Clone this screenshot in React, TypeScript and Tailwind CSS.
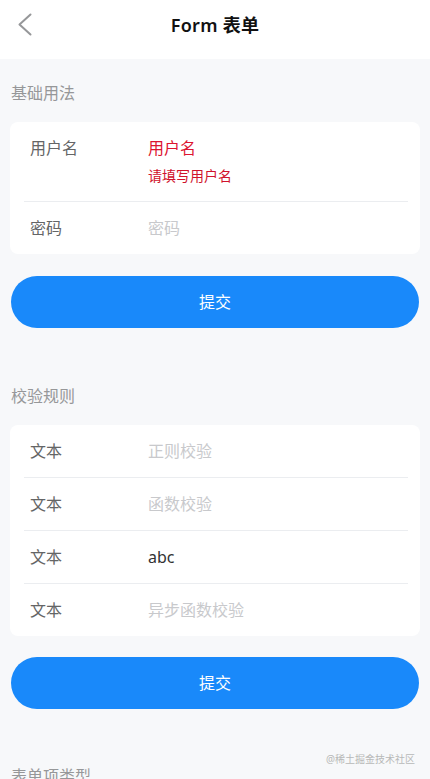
import React from 'react';

const FONT = { fontFamily: '"Noto Sans", "Noto Sans CJK SC", sans-serif' };

type Field = {
    label: string;
    value?: string;
    placeholder?: string;
    error?: string;
};

const basicFields: Field[] = [
    { label: '用户名', value: '用户名', error: '请填写用户名' },
    { label: '密码', placeholder: '密码' },
];

const ruleFields: Field[] = [
    { label: '文本', placeholder: '正则校验' },
    { label: '文本', placeholder: '函数校验' },
    { label: '文本', value: 'abc' },
    { label: '文本', placeholder: '异步函数校验' },
];

function FieldRow({ field }: { field: Field }) {
    const hasError = !!field.error;
    return (
        <div className="flex px-[20px] pt-[14px] pb-[14px]">
            <div className="w-[118px] shrink-0 text-[16px] leading-[24px] text-[#646566]">
                {field.label}
            </div>
            <div className="flex-1">
                {field.value ? (
                    <div className={`text-[16px] leading-[24px] ${hasError ? 'text-[#dc1430]' : 'text-[#323233]'}`}>
                        {field.value}
                    </div>
                ) : (
                    <div className="text-[16px] leading-[24px] text-[#c8c9cc]">{field.placeholder}</div>
                )}
                {hasError && (
                    <div className="mt-[6px] mb-[1px] text-[14px] leading-[20px] text-[#d0122c]">{field.error}</div>
                )}
            </div>
        </div>
    );
}

function FormCard({ fields }: { fields: Field[] }) {
    return (
        <div className="mx-[10px] rounded-[8px] bg-white overflow-hidden">
            {fields.map((f, i) => (
                <React.Fragment key={i}>
                    {i > 0 && <div className="h-px bg-[#ebedf0] ml-[14px] mr-[12px]" />}
                    <FieldRow field={f} />
                </React.Fragment>
            ))}
        </div>
    );
}

function SubmitButton({ top }: { top: string }) {
    return (
        <div className={`px-[11px] ${top}`}>
            <button className="w-full h-[52px] rounded-full bg-[#1989fa] text-white text-[16px]">
                提交
            </button>
        </div>
    );
}

function SectionTitle({ title, top }: { title: string; top: string }) {
    return (
        <div className={`${top} pb-[20px] px-[11px] text-[16px] leading-[18px] text-[#969799]`}>{title}</div>
    );
}

export default function App() {
    return (
        <div className="relative h-[779px] overflow-hidden bg-[#f7f8fa]" style={FONT}>
            {/* 导航栏 */}
            <div className="h-[59px] bg-white">
                <div className="relative h-[50px] flex items-center justify-center">
                    <svg className="absolute left-[17px] top-[13px]" width="16" height="23" viewBox="0 0 16 23" fill="none">
                        <path d="M13.5 1.5 L2.5 11.5 L13.5 21.5" stroke="#969799" strokeWidth="2" strokeLinecap="round" strokeLinejoin="round" />
                    </svg>
                    <span className="text-[18px] font-semibold tracking-[0.3px] text-[#111]">Form 表单</span>
                </div>
            </div>

            <SectionTitle title="基础用法" top="pt-[25px]" />
            <FormCard fields={basicFields} />
            <SubmitButton top="pt-[22px]" />

            <SectionTitle title="校验规则" top="pt-[59px]" />
            <FormCard fields={ruleFields} />
            <SubmitButton top="pt-[21px]" />

            <SectionTitle title="表单项类型" top="pt-[58px]" />

            <div className="absolute right-[15px] bottom-[13px] text-[10px] leading-[14px] text-[#b8b8b8]">
                @稀土掘金技术社区
            </div>
        </div>
    );
}
